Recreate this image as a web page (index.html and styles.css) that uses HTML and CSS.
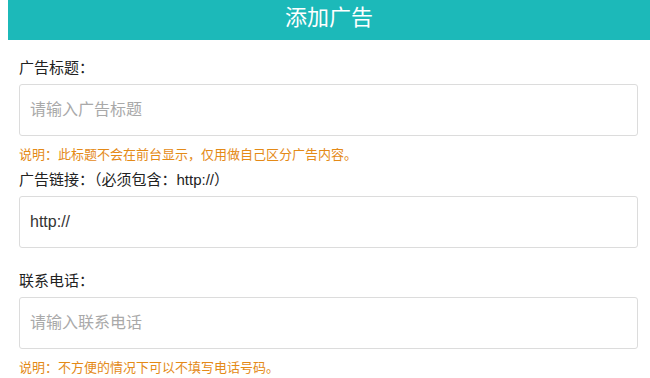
FILE: index.html
```html
<!DOCTYPE html>
<html lang="zh-CN">

<head>
  <meta charset="UTF-8">
  <meta name="viewport" content="width=device-width, initial-scale=1.0">
  <title>添加广告</title>
  <link rel="stylesheet" href="styles.css">
</head>

<body>
  <h1 class="page-title">添加广告</h1>

  <form class="ad-form">
    <div class="field">
      <label for="ad_title">广告标题：</label>
      <input type="text" id="ad_title" name="ad_title" placeholder="请输入广告标题">
      <p class="tip">说明：此标题不会在前台显示，仅用做自己区分广告内容。</p>
    </div>

    <div class="field">
      <label for="ad_link">广告链接：（必须包含：http://）</label>
      <input type="text" id="ad_link" name="ad_link" value="http://">
    </div>

    <div class="field field-gap">
      <label for="ad_phone">联系电话：</label>
      <input type="text" id="ad_phone" name="ad_phone" placeholder="请输入联系电话">
      <p class="tip">说明：不方便的情况下可以不填写电话号码。</p>
    </div>
  </form>
</body>

</html>
```

FILE: styles.css
```css
body {
  margin: 0 0 0 8px;
  font-family: "Liberation Sans", "Noto Sans CJK SC", sans-serif;
  color: #222;
  background: #fff;
}

.page-title {
  margin: 0;
  height: 40px;
  line-height: 35px;
  background-color: #1cb9b9;
  color: #fff;
  font-size: 22px;
  font-weight: normal;
  text-align: center;
}

.ad-form {
  padding: 18px 12px 0 11px;
}

.field label {
  display: block;
  font-size: 15px;
  line-height: 20px;
}

.field input {
  display: block;
  box-sizing: border-box;
  width: 100%;
  height: 52px;
  margin-top: 6px;
  padding: 0 10px;
  border: 1px solid #dcdcdc;
  border-radius: 3px;
  font-family: "Liberation Sans", "Noto Sans CJK SC", sans-serif;
  font-size: 16px;
  color: #333;
  outline: none;
}

.field input::placeholder {
  color: #a9a9a9;
}

.tip {
  margin: 10px 0 6px;
  font-size: 13px;
  line-height: 18px;
  color: #e48a17;
}

.field-gap {
  margin-top: 23px;
}
```
